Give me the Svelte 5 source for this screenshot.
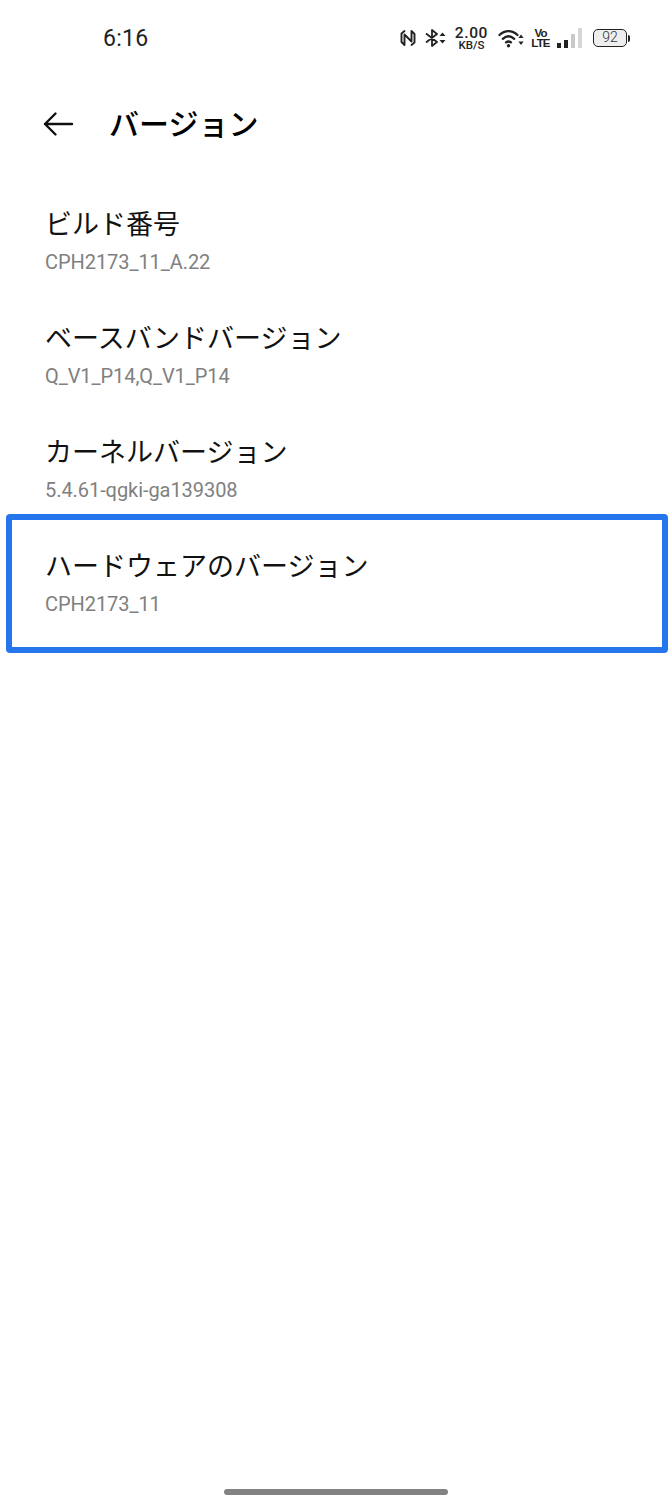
<script>
    const items = [
        { title: 'ビルド番号', value: 'CPH2173_11_A.22' },
        { title: 'ベースバンドバージョン', value: 'Q_V1_P14,Q_V1_P14' },
        { title: 'カーネルバージョン', value: '5.4.61-qgki-ga139308' },
        { title: 'ハードウェアのバージョン', value: 'CPH2173_11', marked: true },
    ];
</script>

<div class="screen">
    <div class="status">
        <span class="time">6:16</span>
        <div class="icons">
            <svg class="nfc" width="16" height="18" viewBox="0 0 16 18" fill="none" stroke="#222" stroke-width="1.9" stroke-linejoin="round" stroke-linecap="round">
                <path d="M4.5 2 L1.5 4.5 V13 L4.5 16 V5.5 L11.5 12.5 V2 L14.5 5 V13.5 L11.5 16" />
            </svg>
            <svg class="bt" width="21" height="18" viewBox="0 0 21 18" fill="none" stroke="#222" stroke-width="1.8" stroke-linejoin="round">
                <path d="M1 4.5 L12 13 L7 17 V1 L12 5 L1 13.5" />
                <path d="M17.5 3.5 L20.5 7 H14.5 Z M17.5 14.5 L20.5 11 H14.5 Z" fill="#222" stroke="none" />
            </svg>
            <div class="speed">
                <span class="speed-num">2.00</span>
                <span class="speed-unit">KB/S</span>
            </div>
            <svg class="wifi" width="26" height="19" viewBox="0 0 26 19" fill="none" stroke="#222" stroke-width="2.3" stroke-linecap="round">
                <path d="M1.5 6 C7 0.8 14 0.8 19.5 6" />
                <path d="M4.8 9.8 C8.4 6.6 12.6 6.6 16.2 9.8" />
                <path d="M8 13.4 C9.6 12.2 11.4 12.2 13 13.4" />
                <circle cx="10.5" cy="16.8" r="1.7" fill="#222" stroke="none" />
                <path d="M23 5.5 L25.6 9 H20.4 Z M23 16 L25.6 12.5 H20.4 Z" fill="#222" stroke="none" />
            </svg>
            <div class="volte">
                <span>Vo</span>
                <span>LTE</span>
            </div>
            <svg class="signal" width="25" height="20" viewBox="0 0 25 20">
                <rect x="0" y="15" width="4" height="5" fill="#222" />
                <rect x="7" y="12" width="4" height="8" fill="#222" />
                <rect x="14" y="6" width="4" height="14" fill="#c9c9c9" />
                <rect x="21" y="0" width="4" height="20" fill="#d6d6d6" />
            </svg>
            <div class="battery">
                <div class="battery-body">92</div>
                <div class="battery-cap"></div>
            </div>
        </div>
    </div>

    <div class="header">
        <svg class="back" width="32" height="26" viewBox="0 0 32 26" fill="none" stroke="#111" stroke-width="2.4" stroke-linecap="round" stroke-linejoin="round">
            <path d="M30 13 H3 M13.5 2.5 L3 13 L13.5 23.5" />
        </svg>
        <h1>バージョン</h1>
    </div>

    <div class="list">
        {#each items as item}
            <div class="row" class:marked={item.marked}>
                <div class="row-title">{item.title}</div>
                <div class="row-value">{item.value}</div>
            </div>
        {/each}
    </div>

    <div class="home-wrap">
        <div class="home"></div>
    </div>
</div>

<style>
    :global(body) {
        margin: 0;
        background: #fff;
    }

    .screen {
        width: 672px;
        height: 1500px;
        display: flex;
        flex-direction: column;
        background: #fff;
        font-family: "Roboto", "Noto Sans CJK JP", sans-serif;
        color: #111;
        overflow: hidden;
    }

    .status {
        height: 76px;
        box-sizing: border-box;
        padding: 0 42px 0 103px;
        display: flex;
        align-items: center;
        justify-content: space-between;
    }

    .time {
        font-size: 23px;
        letter-spacing: 0.3px;
        color: #222;
    }

    .icons {
        display: flex;
        align-items: center;
        gap: 9px;
    }

    .speed {
        display: flex;
        flex-direction: column;
        align-items: center;
        line-height: 1;
        color: #222;
        margin: 0 1px 0 0;
    }

    .speed-num {
        font-size: 15.5px;
        font-weight: 500;
        letter-spacing: 0.6px;
        line-height: 14px;
    }

    .speed-unit {
        font-size: 11.5px;
        font-weight: 500;
        line-height: 10px;
    }

    .volte {
        width: 15px;
        display: flex;
        flex-direction: column;
        align-items: center;
        font-family: "Liberation Sans", sans-serif;
        font-size: 11.5px;
        font-weight: 700;
        letter-spacing: -0.8px;
        line-height: 10px;
        color: #222;
    }

    .battery {
        display: flex;
        align-items: center;
        margin-left: 2px;
    }

    .battery-body {
        width: 34px;
        height: 18px;
        box-sizing: border-box;
        border: 1.6px solid #222;
        border-radius: 5px;
        background: #eee;
        font-size: 14px;
        font-weight: 300;
        line-height: 15px;
        text-align: center;
        color: #333;
    }

    .battery-cap {
        width: 2px;
        height: 7px;
        margin-left: 1px;
        background: #222;
        border-radius: 0 2px 2px 0;
    }

    .header {
        height: 96px;
        display: flex;
        align-items: center;
        padding-left: 42px;
    }

    .back {
        flex: none;
    }

    h1 {
        margin: 0 0 0 35px;
        padding-bottom: 4px;
        font-family: "Noto Sans CJK JP", sans-serif;
        font-size: 30px;
        font-weight: 500;
        line-height: 1;
        color: #000;
    }

    .list {
        padding-top: 13px;
        flex: 1;
    }

    .row {
        position: relative;
        height: 114px;
        box-sizing: border-box;
        padding: 19px 45px 0;
    }

    .row.marked::after {
        content: "";
        position: absolute;
        left: 6px;
        right: 4px;
        top: -13px;
        bottom: -12px;
        border: 6.5px solid #2575ed;
        border-radius: 4px;
    }

    .row-title {
        font-family: "Noto Sans CJK JP", sans-serif;
        font-size: 27px;
        line-height: 38px;
        color: #111;
    }

    .row-value {
        margin-top: 2px;
        font-size: 20px;
        letter-spacing: -0.06px;
        line-height: 36px;
        color: #808080;
    }

    .home-wrap {
        height: 8px;
        padding-bottom: 3px;
        display: flex;
        justify-content: center;
    }

    .home {
        width: 224px;
        height: 6px;
        border-radius: 3px;
        background: #838383;
    }
</style>
